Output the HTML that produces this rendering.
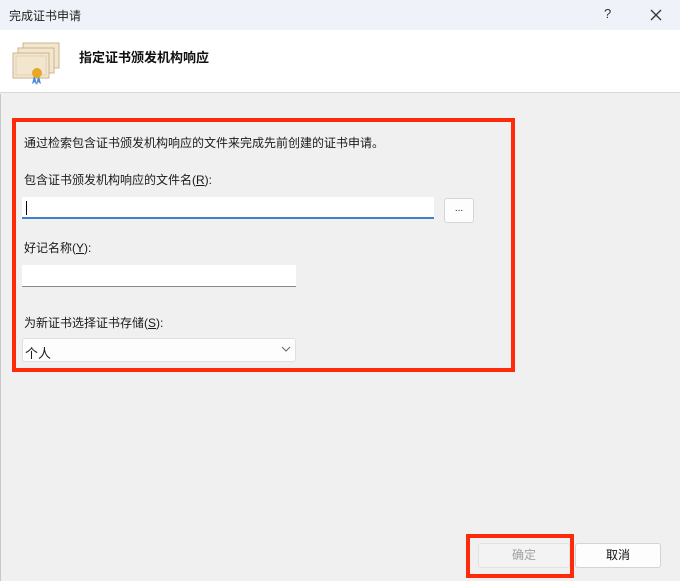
<!DOCTYPE html>
<html><head><meta charset="utf-8"><style>
*{margin:0;padding:0;box-sizing:border-box}
body{width:680px;height:581px;overflow:hidden;background:#f0f0f0;font-family:"Liberation Sans","Noto Sans CJK SC",sans-serif;font-size:12px;color:#1a1a1a;position:relative}
.abs{position:absolute}
.t{position:absolute;white-space:nowrap}
</style></head><body>
<div class="abs" style="left:0;top:0;width:680px;height:30px;background:#eff3f9"></div>
<div class="t" style="left:9px;top:7px;font-size:12px;color:#222">完成证书申请</div>
<div class="t" style="left:604px;top:6px;font-size:13px;color:#333">?</div>
<svg class="abs" style="left:650px;top:9px" width="12" height="12"><path d="M1 1L11 11M11 1L1 11" stroke="#333" stroke-width="1.3"/></svg>
<div class="abs" style="left:0;top:30px;width:680px;height:63px;background:#fff;border-bottom:1px solid #d8d8d8"></div>
<svg class="abs" style="left:6px;top:40px" width="54" height="46">
<rect x="17" y="3" width="36" height="25" fill="#f2e6cf" stroke="#c9b48e"/>
<rect x="12" y="8" width="36" height="25" fill="#f2e6cf" stroke="#c9b48e"/>
<rect x="7" y="13" width="36" height="25" fill="#f2e6cf" stroke="#c9b48e"/>
<rect x="10" y="16" width="30" height="19" fill="none" stroke="#e0d2b4"/>
<path d="M28 36l-2 8 3-2 1 3 2-8zM33 36l2 8-3-2-1 3-2-8z" fill="#4a8ad8"/>
<circle cx="31" cy="33" r="5" fill="#e6a825"/>
</svg>
<div class="t" style="left:79px;top:47px;font-size:13px;font-weight:bold;color:#111">指定证书颁发机构响应</div>
<div class="abs" style="left:0;top:94px;width:1px;height:487px;background:#c8c8c8"></div>

<div class="t" style="left:24px;top:134px">通过检索包含证书颁发机构响应的文件来完成先前创建的证书申请。</div>
<div class="t" style="left:24px;top:171px">包含证书颁发机构响应的文件名(<u>R</u>):</div>
<div class="abs" style="left:22px;top:197px;width:412px;height:22px;background:#fff;border-bottom:2px solid #3f7fcf"></div>
<div class="abs" style="left:26px;top:201px;width:1px;height:14px;background:#000"></div>
<div class="abs" style="left:444px;top:198px;width:30px;height:25px;background:#fdfdfd;border:1px solid #d6d6d6;border-radius:3px;text-align:center;font-size:10px;line-height:20px">...</div>
<div class="t" style="left:24px;top:239px">好记名称(<u>Y</u>):</div>
<div class="abs" style="left:22px;top:265px;width:274px;height:22px;background:#fff;border-bottom:1px solid #8a8a8a"></div>
<div class="t" style="left:24px;top:314px">为新证书选择证书存储(<u>S</u>):</div>
<div class="abs" style="left:22px;top:338px;width:274px;height:24px;background:#fdfdfd;border:1px solid #e0e0e0;border-radius:3px"></div>
<div class="t" style="left:25px;top:343px;font-size:13px">个人</div>
<svg class="abs" style="left:281px;top:346px" width="10" height="7"><path d="M1 1l4 4 4-4" stroke="#666" fill="none"/></svg>

<div class="abs" style="left:12px;top:118px;width:503px;height:254px;border:4px solid #ff2a0a"></div>

<div class="abs" style="left:478px;top:543px;width:92px;height:25px;background:#f3f3f3;border:1px solid #e2e2e2;border-radius:3px;text-align:center;line-height:23px;color:#a0a0a0">确定</div>
<div class="abs" style="left:575px;top:543px;width:86px;height:25px;background:#fdfdfd;border:1px solid #d4d4d4;border-radius:3px;text-align:center;line-height:23px;color:#111">取消</div>
<div class="abs" style="left:466px;top:534px;width:108px;height:44px;border:4px solid #ff2a0a"></div>
</body></html>
